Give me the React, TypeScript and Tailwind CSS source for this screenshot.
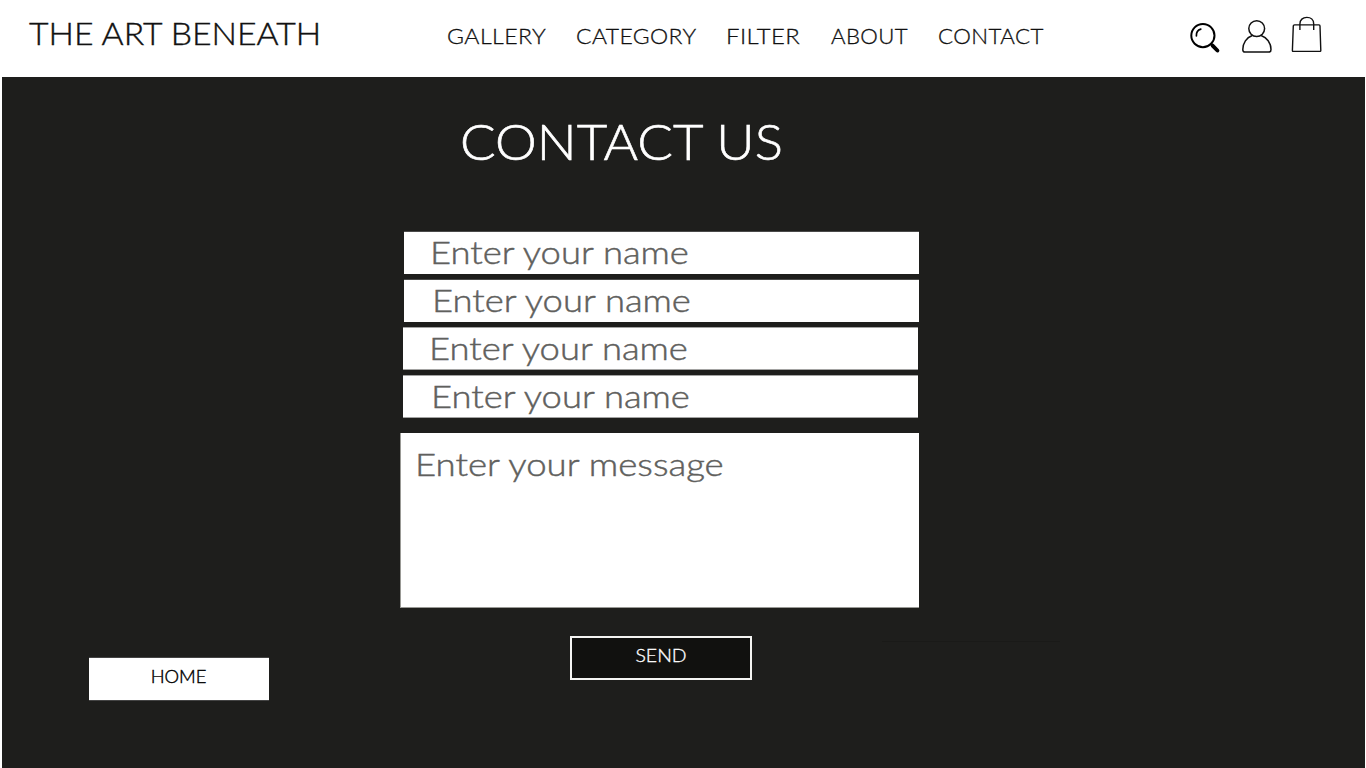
const NAV = [
  { label: "GALLERY", box: "w-[129px]", text: "scale-x-[1.1]" },
  { label: "CATEGORY", box: "w-[150px]", text: "scale-x-[1.09]" },
  { label: "FILTER", box: "w-[105px]", text: "scale-x-[1.135]" },
  { label: "ABOUT", box: "w-[107px]", text: "scale-x-[1.055]" },
  { label: "CONTACT", box: "w-[120px]", text: "scale-x-[1.06]" },
];

const FIELDS = [
  "ml-[402px] mt-[38px] h-[43px] pl-[26px] border-t border-[#4a4a49]",
  "ml-[402px] mt-[5px] h-[43px] pl-[28px] border-t border-[#4a4a49]",
  "ml-[401px] mt-[5px] h-[43px] pl-[26px] border-y border-[#a3a3a2]",
  "ml-[401px] mt-[5px] h-[43px] pl-[28px] border-y border-[#a3a3a2]",
];

function SearchIcon() {
  return (
    <svg className="h-8 w-8" viewBox="0 0 32 32" fill="none" stroke="#000" strokeLinecap="round">
      <circle cx="13.9" cy="12.6" r="11.6" strokeWidth="2" />
      <path d="M7.4 12.9C7.2 9.3 9 6.9 11.8 6.1" strokeWidth="1.7" />
      <path d="M22 20.7L24.2 22.9" strokeWidth="2" />
      <path d="M23.6 22.6L28.4 27.5" strokeWidth="3.9" />
    </svg>
  );
}

function UserIcon() {
  return (
    <svg className="h-9 w-8" viewBox="0 0 32 36" fill="none" stroke="#111" strokeWidth="1.5">
      <circle cx="15.7" cy="11.6" r="7.9" />
      <path d="M11.3 18.5C5.5 20.5 1.8 26 1.8 32.4Q1.8 35 4 35H27.5Q30 35 30 32.4C30 26 25.8 20.5 20.1 18.5" />
    </svg>
  );
}

function BagIcon() {
  return (
    <svg className="h-9 w-8" viewBox="0 0 32 36" fill="none" stroke="#111" strokeWidth="1.4" strokeLinejoin="round">
      <path d="M3.5 8.9H28Q29 8.9 29 9.9L29.8 34.4Q29.8 35.4 28.8 35.4H2.4Q1.4 35.4 1.4 34.4L2.3 9.9Q2.4 8.9 3.5 8.9Z" />
      <path d="M8.9 14V7.9C8.9 3.8 11.8 1.4 15.8 1.4S22.7 3.8 22.7 7.9V14" />
    </svg>
  );
}

export default function App() {
  return (
    <div className="h-[768px] w-[1366px] overflow-hidden bg-white font-['Lato',sans-serif] font-light whitespace-nowrap">
      <header className="flex h-[77px] items-start">
        <div className="w-[447px] pl-[29px] pt-[14px] text-[31.5px] leading-[38px] text-[#111]">
          <span className="inline-block origin-left scale-x-[1.07] [-webkit-text-stroke:0.4px_#111]">THE ART BENEATH</span>
        </div>
        <nav className="flex w-[742px] pt-[21px] text-[21px] leading-[30px] tracking-[0.4px] text-[#111]">
          {NAV.map((n) => (
            <a key={n.label} className={n.box}>
              <span className={`inline-block origin-left [-webkit-text-stroke:0.3px_#111] ${n.text}`}>{n.label}</span>
            </a>
          ))}
        </nav>
        <div className="flex pt-4">
          <div className="mr-[20px] mt-[7px]"><SearchIcon /></div>
          <div className="mr-[18px] mt-px"><UserIcon /></div>
          <BagIcon />
        </div>
      </header>

      <main className="ml-[2px] mr-px h-[691px] bg-[#1e1e1c]">
        <h1 className="h-[116px] pl-[458px] pt-[34px] text-[49px] leading-[60px] text-white">
          <span className="inline-block origin-left scale-x-[1.077] [-webkit-text-stroke:0.6px_white]">CONTACT US</span>
        </h1>
        <form>
          {FIELDS.map((cls, i) => (
            <div key={i} className={`w-[515px] bg-white text-[31.5px] leading-[40px] text-[#60605d] ${cls}`}>
              <span className="inline-block origin-left scale-x-[1.156] [-webkit-text-stroke:0.45px_#60605d]">Enter your name</span>
            </div>
          ))}
          <div className="ml-[398px] mt-[15px] h-[175px] w-[519px] border-b border-l border-[#999995] bg-white pl-[14px] pt-[10px] text-[31.5px] leading-[42px] text-[#60605d]">
            <span className="inline-block origin-left scale-x-[1.162] [-webkit-text-stroke:0.45px_#60605d]">Enter your message</span>
          </div>
          <div className="flex h-[100px] items-start">
            <button type="button" className="ml-[87px] mt-[49px] h-[44px] w-[180px] border-y border-[#444] bg-white pb-[5px] text-[17.5px] leading-[36px] text-black">
              <span className="inline-block scale-x-[1.05] [-webkit-text-stroke:0.4px_black]">HOME</span>
            </button>
            <button type="button" className="ml-[301px] mt-[28px] h-[44px] w-[182px] border-2 border-[#f4f4f2] bg-[#11110f] pb-[5px] text-[17.5px] leading-[35px] text-white">
              <span className="inline-block scale-x-[1.11] [-webkit-text-stroke:0.3px_white]">SEND</span>
            </button>
            <div className="ml-[130px] mt-[33px] h-px w-[178px] bg-[#1a1a18]" />
          </div>
        </form>
      </main>
    </div>
  );
}
